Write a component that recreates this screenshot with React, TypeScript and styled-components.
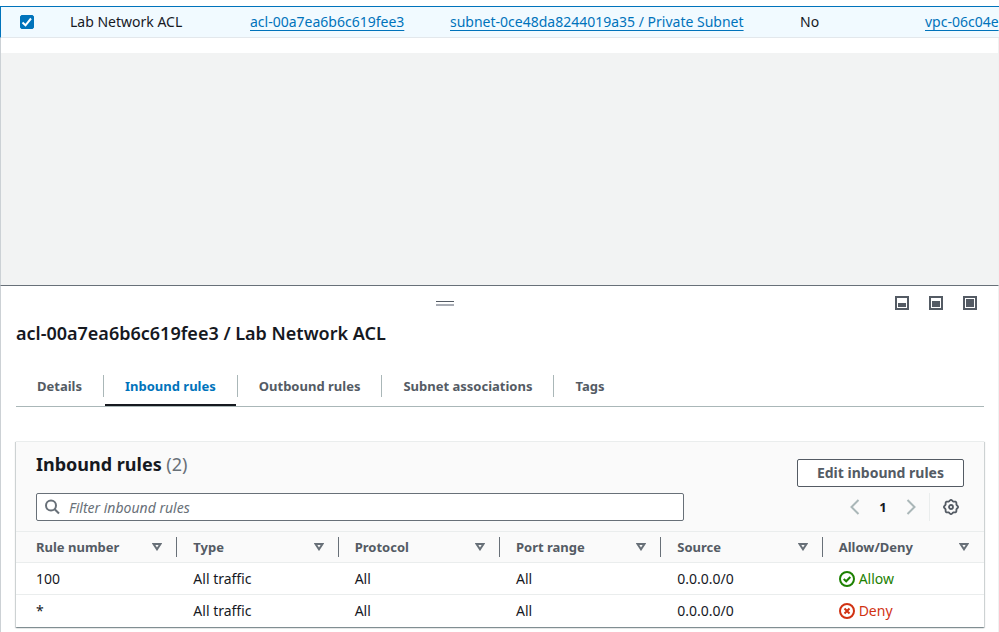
import React, { useState } from "react";
import styled, { createGlobalStyle, css } from "styled-components";

const ink = "#16191f";
const grey = "#545b64";
const midGrey = "#687078";
const link = "#0073bb";
const line = "#eaeded";

const GlobalStyle = createGlobalStyle`
  *, *::before, *::after { box-sizing: border-box; }
  body {
    margin: 0;
    background: #fff;
    color: ${ink};
    font: 14px/20px "Noto Sans", "Open Sans", sans-serif;
  }
  button, input { font: inherit; color: inherit; }
`;

const Page = styled.div`
  min-height: 100vh;
  display: flex;
  flex-direction: column;
  overflow: hidden;
`;

const edges = css`
  border-left: 1px solid #ccd1d5;
  border-right: 1px solid #f0f1f1;
`;

const ListArea = styled.section`
  padding-top: 6px;
  overflow: hidden;
`;

const ListFooter = styled.div`
  ${edges}
  height: 15px;
`;

const AclTable = styled.table`
  width: 100%;
  min-width: 1100px;
  table-layout: fixed;
  border-collapse: separate;
  border-spacing: 0;
`;

const AclCell = styled.td<{ $width?: number; $first?: boolean }>`
  width: ${(p) => (p.$width ? `${p.$width}px` : "auto")};
  height: 32px;
  padding: 0 0 0 20px;
  background: #f1faff;
  border-top: 1px solid ${link};
  border-bottom: 1px solid #e3e8ec;
  border-left: ${(p) => (p.$first ? `1px solid ${link}` : "none")};
  white-space: nowrap;
`;

const RowCheckbox = styled.label`
  display: flex;
  position: relative;
  width: 14px;
  height: 14px;
  margin-left: -1px;

  input {
    appearance: none;
    width: 14px;
    height: 14px;
    margin: 0;
    border: 1px solid ${midGrey};
    border-radius: 2px;
    background: #fff;
  }
  input:checked {
    border-color: ${link};
    background: ${link};
  }
  svg {
    position: absolute;
    inset: 0;
    pointer-events: none;
  }
`;

const TextLink = styled.a`
  color: ${link};
  text-decoration: underline;
  text-decoration-thickness: 1px;
  text-underline-offset: 3px;
  text-decoration-skip-ink: none;
`;

const Backdrop = styled.div`
  ${edges}
  flex: 1;
  background: #f2f3f3;
`;

const SplitPanel = styled.section`
  ${edges}
  border-top: 1px solid ${midGrey};
  padding: 0 14px 5px 15px;
`;

const PanelBar = styled.div`
  display: grid;
  grid-template-columns: 1fr auto;
  column-gap: 22px;
  align-items: center;
  height: 34px;
  padding-right: 7px;
`;

const DragHandle = styled.button`
  justify-self: center;
  width: 18px;
  height: 5px;
  padding: 0;
  border: 0;
  border-top: 1px solid ${grey};
  border-bottom: 2px solid #a9adb5;
  background: none;
  cursor: row-resize;
`;

const SizeButtons = styled.div`
  display: flex;
  gap: 20px;
`;

const IconButton = styled.button`
  display: flex;
  padding: 0;
  border: 0;
  background: none;
  color: ${grey};
`;

const PanelTitle = styled.h2`
  margin: 1px 0 0;
  font-size: 18px;
  font-weight: 600;
  line-height: 24px;
`;

const TabList = styled.div`
  display: flex;
  gap: 1px;
  margin-top: 25px;
  border-bottom: 1px solid #aab7b8;
`;

const Tab = styled.button<{ $active: boolean }>`
  position: relative;
  height: 36px;
  padding: 0 21px 4px;
  border: 0;
  background: none;
  color: ${(p) => (p.$active ? link : grey)};
  font-size: 13px;
  font-weight: 700;

  &:not(:last-child)::before {
    content: "";
    position: absolute;
    right: -1px;
    top: 5px;
    width: 1px;
    height: 22px;
    background: #aab7b8;
  }
  ${(p) =>
    p.$active &&
    css`
      &::after {
        content: "";
        position: absolute;
        left: 1px;
        right: 1px;
        bottom: 0;
        height: 2px;
        background: ${ink};
      }
    `}
`;

const Card = styled.section`
  margin-top: 34px;
  padding-bottom: 1px;
  border-top: 1px solid ${line};
  background: #fff;
  box-shadow: 0 1px 1px 0 rgba(0, 28, 36, 0.3), 1px 1px 1px 0 rgba(0, 28, 36, 0.15),
    -1px 1px 1px 0 rgba(0, 28, 36, 0.15);
`;

const CardHeader = styled.header`
  display: grid;
  grid-template-columns: 1fr auto;
  row-gap: 6px;
  padding: 10px 20px 10px;
  background: #fafafa;
`;

const CardTitle = styled.h3`
  margin: 0;
  font-size: 18px;
  font-weight: 700;
  line-height: 24px;

  span {
    color: ${midGrey};
    font-weight: 400;
  }
`;

const EditButton = styled.button`
  height: 28px;
  margin-top: 7px;
  padding: 0 19px;
  border: 1px solid ${grey};
  border-radius: 2px;
  background: #fff;
  color: ${grey};
  font-weight: 700;
  line-height: 20px;
`;

const Filter = styled.label`
  position: relative;
  display: flex;
  margin-right: 113px;

  svg {
    position: absolute;
    left: 8px;
    top: 6px;
    color: ${midGrey};
  }
  input {
    width: 100%;
    height: 28px;
    padding: 0 10px 0 32px;
    border: 1px solid ${midGrey};
    border-radius: 2px;
    background: #fff;
  }
  input::placeholder {
    color: ${midGrey};
    font-style: italic;
    opacity: 1;
  }
`;

const Pagination = styled.nav`
  display: flex;
  align-items: center;
  justify-content: flex-end;
  height: 28px;
  padding-right: 5px;
`;

const PageArrow = styled(IconButton)`
  color: #aab7b8;
`;

const PageNumber = styled.button`
  width: 46px;
  padding: 0;
  border: 0;
  background: none;
  font-size: 13px;
  font-weight: 700;
`;

const Divider = styled.span`
  width: 1px;
  height: 28px;
  margin: 0 13px;
  background: ${line};
`;

const RulesTable = styled.table`
  width: 100%;
  table-layout: fixed;
  border-collapse: separate;
  border-spacing: 0;
  text-align: left;

  td {
    height: 32px;
    padding: 1px 0 0 16px;
    border-top: 1px solid ${line};
  }
  td:first-child {
    padding-left: 20px;
  }
`;

const HeadCell = styled.th`
  height: 31px;
  padding: 0;
  border-top: 1px solid ${line};
  background: #fafafa;
  color: ${grey};
  font-size: 13px;
  font-weight: 700;

  &:first-child > div {
    padding-left: 20px;
  }
  &:last-child > div {
    border-right-color: transparent;
  }
`;

const HeadContent = styled.div`
  display: flex;
  align-items: center;
  justify-content: space-between;
  height: 20px;
  padding: 0 14px 0 16px;
  border-right: 1px solid ${midGrey};
`;

const Status = styled.span<{ $allow: boolean }>`
  display: flex;
  align-items: center;
  gap: 4px;
  color: ${(p) => (p.$allow ? "#1d8102" : "#d13212")};
`;

type PanelSize = "small" | "medium" | "full";

const sizeBoxes: Record<PanelSize, { x: number; y: number; w: number; h: number }> = {
  small: { x: 3, y: 7, w: 8, h: 4 },
  medium: { x: 3, y: 5, w: 8, h: 6 },
  full: { x: 3, y: 3, w: 8, h: 8 },
};

function SizeIcon({ size }: { size: PanelSize }) {
  const b = sizeBoxes[size];
  return (
    <svg width="14" height="14" viewBox="0 0 14 14" aria-hidden="true">
      <rect x="1" y="1" width="12" height="12" fill="none" stroke="currentColor" strokeWidth="2" />
      <rect x={b.x} y={b.y} width={b.w} height={b.h} fill="currentColor" />
    </svg>
  );
}

function CheckIcon() {
  return (
    <svg width="14" height="14" viewBox="0 0 14 14" fill="none" stroke="#fff" strokeWidth="2" aria-hidden="true">
      <path d="M2.5 7.5 5.5 10.3 11 3.5" />
    </svg>
  );
}

function SearchIcon() {
  return (
    <svg width="16" height="16" viewBox="0 0 16 16" fill="none" stroke="currentColor" strokeWidth="2" aria-hidden="true">
      <circle cx="7" cy="6.5" r="5" />
      <path d="M10.7 10.2 15 14.5" />
    </svg>
  );
}

function ArrowIcon({ next }: { next?: boolean }) {
  return (
    <svg width="10" height="16" viewBox="0 0 10 16" fill="none" stroke="currentColor" strokeWidth="2" aria-hidden="true">
      <path d={next ? "M1.5 1 8.5 8 1.5 15" : "M8.5 1 1.5 8 8.5 15"} />
    </svg>
  );
}

// Eight-toothed wheel outline around the centre of a 16 unit box.
const gearOutline = Array.from({ length: 64 }, (_, i) => {
  const angle = (i * Math.PI) / 32;
  const radius = 6.5 + 0.6 * Math.cos(8 * angle);
  return `${(8 + radius * Math.cos(angle)).toFixed(2)},${(8 + radius * Math.sin(angle)).toFixed(2)}`;
}).join(" ");

function GearIcon() {
  return (
    <svg width="16" height="16" viewBox="0 0 16 16" fill="none" stroke="currentColor" aria-hidden="true">
      <polygon points={gearOutline} strokeWidth="1.8" strokeLinejoin="round" />
      <circle cx="8" cy="8" r="2" strokeWidth="1.8" />
    </svg>
  );
}

function SortIcon() {
  return (
    <svg width="10" height="8" viewBox="0 0 10 8" fill="none" stroke={midGrey} strokeWidth="2" aria-hidden="true">
      <path d="M1.5 1h7L5 6.3z" />
    </svg>
  );
}

function StatusIcon({ allow }: { allow: boolean }) {
  return (
    <svg width="16" height="16" viewBox="0 0 16 16" fill="none" stroke="currentColor" strokeWidth="2" aria-hidden="true">
      <circle cx="8" cy="8" r="7" />
      <path d={allow ? "M4.7 8 7.2 10.3 11.3 6" : "M5.5 5.5 10.5 10.5M10.5 5.5 5.5 10.5"} />
    </svg>
  );
}

const tabs = ["Details", "Inbound rules", "Outbound rules", "Subnet associations", "Tags"];
const columns = ["Rule number", "Type", "Protocol", "Port range", "Source", "Allow/Deny"];
const rules = [
  { number: "100", type: "All traffic", protocol: "All", ports: "All", source: "0.0.0.0/0", allow: true },
  { number: "*", type: "All traffic", protocol: "All", ports: "All", source: "0.0.0.0/0", allow: false },
];

export default function App() {
  const [active, setActive] = useState("Inbound rules");
  return (
    <>
      <GlobalStyle />
      <Page>
        <ListArea>
          <AclTable>
            <tbody>
              <tr>
                <AclCell $width={50} $first>
                  <RowCheckbox>
                    <input type="checkbox" defaultChecked aria-label="Select Lab Network ACL" />
                    <CheckIcon />
                  </RowCheckbox>
                </AclCell>
                <AclCell $width={180}>Lab Network ACL</AclCell>
                <AclCell $width={200}>
                  <TextLink href="#acl">acl-00a7ea6b6c619fee3</TextLink>
                </AclCell>
                <AclCell $width={350}>
                  <TextLink href="#subnet">subnet-0ce48da8244019a35 / Private Subnet</TextLink>
                </AclCell>
                <AclCell $width={125}>No</AclCell>
                <AclCell>
                  <TextLink href="#vpc">vpc-06c04e</TextLink>
                </AclCell>
              </tr>
            </tbody>
          </AclTable>
          <ListFooter />
        </ListArea>
        <Backdrop />
        <SplitPanel>
          <PanelBar>
            <DragHandle aria-label="Resize panel" />
            <SizeButtons>
              {(["small", "medium", "full"] as PanelSize[]).map((size) => (
                <IconButton key={size} aria-label={`Panel size ${size}`}>
                  <SizeIcon size={size} />
                </IconButton>
              ))}
            </SizeButtons>
          </PanelBar>
          <PanelTitle>acl-00a7ea6b6c619fee3 / Lab Network ACL</PanelTitle>
          <TabList role="tablist">
            {tabs.map((tab) => (
              <Tab
                key={tab}
                role="tab"
                aria-selected={tab === active}
                $active={tab === active}
                onClick={() => setActive(tab)}
              >
                {tab}
              </Tab>
            ))}
          </TabList>
          <Card>
            <CardHeader>
              <CardTitle>
                Inbound rules <span>(2)</span>
              </CardTitle>
              <EditButton>Edit inbound rules</EditButton>
              <Filter>
                <SearchIcon />
                <input type="text" placeholder="Filter inbound rules" aria-label="Filter inbound rules" />
              </Filter>
              <Pagination aria-label="Pages">
                <PageArrow aria-label="Previous page">
                  <ArrowIcon />
                </PageArrow>
                <PageNumber aria-current="page">1</PageNumber>
                <PageArrow aria-label="Next page">
                  <ArrowIcon next />
                </PageArrow>
                <Divider />
                <IconButton aria-label="Preferences">
                  <GearIcon />
                </IconButton>
              </Pagination>
            </CardHeader>
            <RulesTable>
              <thead>
                <tr>
                  {columns.map((column) => (
                    <HeadCell key={column} scope="col">
                      <HeadContent>
                        {column}
                        <SortIcon />
                      </HeadContent>
                    </HeadCell>
                  ))}
                </tr>
              </thead>
              <tbody>
                {rules.map((rule) => (
                  <tr key={rule.number}>
                    <td>{rule.number}</td>
                    <td>{rule.type}</td>
                    <td>{rule.protocol}</td>
                    <td>{rule.ports}</td>
                    <td>{rule.source}</td>
                    <td>
                      <Status $allow={rule.allow}>
                        <StatusIcon allow={rule.allow} />
                        {rule.allow ? "Allow" : "Deny"}
                      </Status>
                    </td>
                  </tr>
                ))}
              </tbody>
            </RulesTable>
          </Card>
        </SplitPanel>
      </Page>
    </>
  );
}
